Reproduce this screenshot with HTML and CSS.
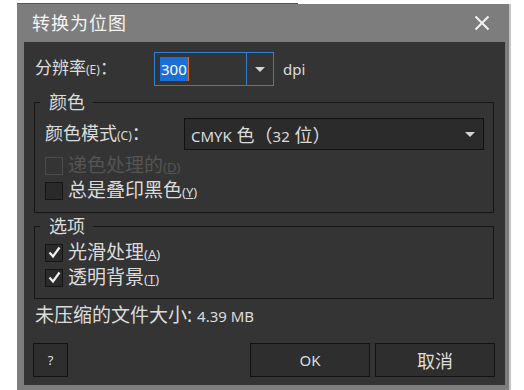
FILE: index.html
```html
<!DOCTYPE html>
<html lang="zh-CN">
<head>
<meta charset="utf-8">
<title>转换为位图</title>
<link rel="stylesheet" href="styles.css">
</head>
<body>
<div class="topline"></div>
<div class="dialog">
  <div class="titlebar">
    <span class="title">转换为位图</span>
    <svg class="close" width="16" height="16" viewBox="0 0 16 16"><path d="M1.5 1.5 L14.5 14.5 M14.5 1.5 L1.5 14.5" stroke="#f2f2f2" stroke-width="2" fill="none"/></svg>
  </div>
  <div class="body">
    <div class="res-row">
      <span class="lbl-res">分辨率<span class="sm">(E)</span>：</span>
      <div class="spin">
        <div class="spin-field"><span class="sel">300</span><span class="caret"></span></div>
        <div class="spin-btn"><span class="tri"></span></div>
      </div>
      <span class="unit">dpi</span>
    </div>
    <fieldset class="group g-color">
      <legend>颜色</legend>
      <div class="mode-row">
        <span class="lbl-mode">颜色模式<span class="sm">(C)</span>：</span>
        <div class="combo">
          <span class="combo-text"><span class="sm2">CMYK</span> 色（<span class="sm2">32</span> 位）</span>
          <span class="tri"></span>
        </div>
      </div>
      <div class="check disabled"><span class="box"></span><span class="ctext">递色处理的<span class="sm">(<u>D</u>)</span></span></div>
      <div class="check"><span class="box"></span><span class="ctext">总是叠印黑色<span class="sm">(<u>Y</u>)</span></span></div>
    </fieldset>
    <fieldset class="group g-opt">
      <legend>选项</legend>
      <div class="check"><span class="box"><svg width="15" height="15" viewBox="0 0 15 15"><path d="M2.5 7.5 L6 11.5 L12.5 2.5" stroke="#f0f0f0" stroke-width="2.2" fill="none"/></svg></span><span class="ctext">光滑处理<span class="sm">(<u>A</u>)</span></span></div>
      <div class="check"><span class="box"><svg width="15" height="15" viewBox="0 0 15 15"><path d="M2.5 7.5 L6 11.5 L12.5 2.5" stroke="#f0f0f0" stroke-width="2.2" fill="none"/></svg></span><span class="ctext">透明背景<span class="sm">(<u>T</u>)</span></span></div>
    </fieldset>
    <div class="size-row">未压缩的文件大小: <span class="sm2">4.39 MB</span></div>
    <div class="btn-row">
      <button class="btn btn-help">?</button>
      <button class="btn btn-ok">OK</button>
      <button class="btn btn-cancel">取消</button>
    </div>
  </div>
</div>
</body>
</html>
```
FILE: styles.css
```css
html, body {
  margin: 0;
  padding: 0;
  background: #ffffff;
}
body {
  font-family: "Noto Sans", "Noto Sans CJK SC", sans-serif;
  color: #dcdcdc;
  font-size: 18px;
}
.topline {
  margin-left: 17px;
  margin-top: 3px;
  width: 281px;
  height: 1px;
  background: #555555;
}
.dialog {
  margin-left: 17px;
  width: 492px;
  box-sizing: border-box;
  background: #7d7d7d;
  padding: 0 4px 5px 7px;
  box-shadow: 2px 0 0 #c4c4c4;
}
.titlebar {
  height: 38px;
  display: flex;
  align-items: center;
  justify-content: space-between;
}
.title {
  margin-left: 8px;
  font-size: 18px;
  line-height: 24px;
  color: #f4f4f4;
  letter-spacing: 1px;
}
.close {
  margin-right: 15px;
  display: block;
}
.body {
  background: #343434;
  height: 343px;
  box-sizing: border-box;
  padding: 10px 11px 0 10px;
  display: flex;
  flex-direction: column;
}
.sm {
  font-size: 12px;
}
.sm2 {
  font-size: 14px;
}
.res-row {
  display: flex;
  align-items: center;
  height: 34px;
  margin-left: 1px;
}
.lbl-res {
  width: 119px;
  line-height: 20px;
  font-size: 17px;
}
.spin {
  width: 120px;
  height: 34px;
  box-sizing: border-box;
  border: 1px solid #2d7fd8;
  display: flex;
}
.spin-field {
  width: 92px;
  border-right: 1px solid #2d7fd8;
  display: flex;
  align-items: center;
  padding-left: 5px;
  box-sizing: border-box;
}
.sel {
  background: #1b6fd6;
  color: #ffffff;
  font-size: 15px;
  line-height: 24px;
  padding: 0 1px;
}
.caret {
  width: 1px;
  height: 24px;
  background: #e07020;
}
.spin-btn {
  flex: 1;
  display: flex;
  align-items: center;
  justify-content: center;
}
.tri {
  width: 0;
  height: 0;
  border-left: 5px solid transparent;
  border-right: 5px solid transparent;
  border-top: 5px solid #d4d4d4;
}
.unit {
  margin-left: 9px;
  font-size: 15px;
}
.group {
  margin: 0;
  border: 1px solid #161616;
  padding-left: 10px;
  padding-right: 9px;
}
.group legend {
  margin-left: -5px;
  padding: 0 8px 0 9px;
  line-height: 20px;
}
.g-color {
  margin-top: 6px;
  padding-top: 6px;
  padding-bottom: 9px;
}
.g-opt {
  margin-top: 3px;
  padding-top: 4px;
  padding-bottom: 8px;
}
.mode-row {
  display: flex;
  align-items: center;
  height: 32px;
  margin-bottom: 3px;
}
.lbl-mode {
  width: 139px;
  line-height: 20px;
}
.combo {
  width: 300px;
  height: 32px;
  box-sizing: border-box;
  background: #2b2b2b;
  border: 1px solid #111111;
  display: flex;
  align-items: center;
  justify-content: space-between;
  padding: 0 8px 0 6px;
  font-size: 18px;
}
.combo .sm2 {
  font-size: 15px;
}
.check {
  display: flex;
  align-items: center;
  height: 25px;
}
.box {
  width: 18px;
  height: 18px;
  box-sizing: border-box;
  background: #2a2a2a;
  border: 1px solid #151515;
  display: flex;
  align-items: center;
  justify-content: center;
}
.box svg {
  display: block;
}
.ctext {
  margin-left: 5px;
  line-height: 20px;
  font-size: 19px;
}
.check .sm {
  font-size: 13px;
}
.check.disabled .box {
  background: transparent;
  border-color: #4c4c4c;
}
.check.disabled .ctext {
  color: #555555;
}
.size-row {
  margin-top: 6px;
  line-height: 20px;
  margin-left: 1px;
  font-size: 19px;
}
.size-row .sm2 {
  font-size: 15px;
}
.btn-row {
  margin-top: 17px;
  display: flex;
  gap: 5px;
  margin-left: -1px;
  margin-right: -1px;
}
.btn {
  height: 34px;
  background: #2e2e2e;
  border: 1px solid #121212;
  color: #dcdcdc;
  font-family: "Noto Sans", "Noto Sans CJK SC", sans-serif;
  font-size: 15px;
  padding: 0;
}
.btn-help {
  width: 35px;
  font-size: 13px;
}
.btn-ok {
  width: 120px;
  margin-left: auto;
}
.btn-cancel {
  width: 120px;
  font-size: 18px;
}
```
